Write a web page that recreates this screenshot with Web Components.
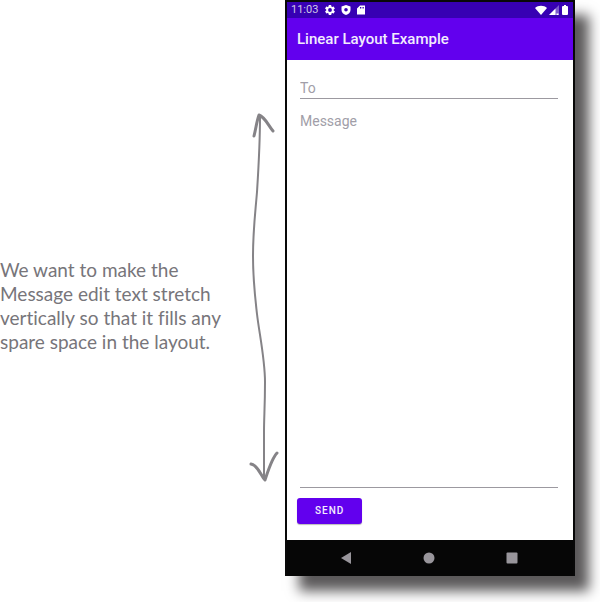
<!DOCTYPE html>
<html lang="en">
<head>
<meta charset="utf-8">
<meta name="viewport" content="width=device-width, initial-scale=1">
<title>Linear Layout Example</title>
<style>
  html, body { margin: 0; background: #fff; }
</style>
</head>
<body>
<figure-page>
  <hand-note slot="note">We want to make the<br>Message edit text stretch<br>vertically so that it fills any<br>spare space in the layout.</hand-note>
  <stretch-arrow slot="arrow"></stretch-arrow>
  <phone-frame slot="phone">
    <status-bar slot="top">11:03</status-bar>
    <app-bar slot="top">Linear Layout Example</app-bar>
    <message-form></message-form>
    <nav-bar slot="bottom"></nav-bar>
  </phone-frame>
</figure-page>

<script>
const define = (name, html) => {
  const template = document.createElement('template');
  template.innerHTML = html;
  customElements.define(name, class extends HTMLElement {
    constructor() {
      super();
      this.attachShadow({ mode: 'open' }).append(template.content.cloneNode(true));
    }
  });
};

define('figure-page', `
  <style>
    :host {
      display: grid; box-sizing: border-box; min-height: 100vh;
      grid-template-columns: minmax(0, 245fr) minmax(0, 40fr) minmax(0, 290fr);
      padding: 0 25px 26px 0; overflow: hidden;
      font-family: Roboto, "Liberation Sans", sans-serif;
    }
  </style>
  <slot name="note"></slot><slot name="arrow"></slot><slot name="phone"></slot>
`);

define('hand-note', `
  <style>
    :host {
      display: block; align-self: center; padding-top: 36px;
      font: 19px/24px Lato, "Liberation Sans", sans-serif;
      font-variant-ligatures: none;
      color: #77757a; white-space: nowrap;
    }
  </style>
  <slot></slot>
`);

define('stretch-arrow', `
  <style>
    :host { display: flex; padding: 112px 0 94px; }
    svg { width: 100%; height: 100%; overflow: visible; }
    path { fill: none; stroke: #858387; stroke-width: 2; stroke-linecap: round; stroke-linejoin: round; }
    .head { stroke-width: 3; }
  </style>
  <svg viewBox="0 0 40 370" preserveAspectRatio="none" aria-hidden="true">
    <path d="M15 4C15 34 13 64 12 80C10 104 8 119 8 144C8 169 10 184 12 202C14 220 20 247 20 270C20 295 19 305 19 320V367"/>
    <path class="head" d="M9 24C11 16 12 8 14 3C20 5 23 13 28 19"/>
    <path class="head" d="M6 352C13 353 16 364 20 368C23 359 27 346 32 341"/>
  </svg>
`);

define('phone-frame', `
  <style>
    :host {
      display: flex; flex-direction: column; background: #fff;
      border: 2px solid #080808; border-bottom-width: 0;
      box-shadow: 14px 15px 12px 0 #5b595a;
    }
    main { flex: 1; display: flex; }
  </style>
  <slot name="top"></slot>
  <main><slot></slot></main>
  <slot name="bottom"></slot>
`);

define('status-bar', `
  <style>
    :host {
      display: flex; align-items: center; height: 16px; padding: 0 4px;
      background: #3700b3; color: #d0c8e4; font-size: 11px; line-height: 16px;
    }
    .icons { display: flex; align-items: center; gap: 6px; margin-left: 7px; flex: 1; }
    .system { display: flex; align-items: center; gap: 2px; }
    svg { display: block; fill: #fff; }
  </style>
  <slot></slot>
  <div class="icons">
    <svg width="10" height="10" viewBox="2 2 20 20"><path d="M19.4 13a7.500 7.500 0 0 0 0-2l2.100-1.600a.5.5 0 0 0 .1-.6l-2-3.500a.5.5 0 0 0-.6-.2l-2.500 1a7.300 7.300 0 0 0-1.700-1l-.4-2.600a.5.5 0 0 0-.5-.5h-4a.5.5 0 0 0-.5.5L9 5.100a7.300 7.300 0 0 0-1.700 1l-2.500-1a.5.5 0 0 0-.6.2l-2 3.500a.5.5 0 0 0 .1.6L4.500 11a7.500 7.500 0 0 0 0 2l-2.100 1.600a.5.5 0 0 0-.1.6l2 3.500a.5.5 0 0 0 .6.200l2.500-1a7.300 7.300 0 0 0 1.700 1l.4 2.600a.5.5 0 0 0 .5.500h4a.5.5 0 0 0 .5-.5l.4-2.600a7.300 7.300 0 0 0 1.700-1l2.500 1a.5.5 0 0 0 .6-.2l2-3.500a.5.5 0 0 0-.1-.6zM12 15.800a3.800 3.800 0 1 1 0-7.600 3.800 3.800 0 0 1 0 7.600z"/></svg>
    <svg width="10" height="10" viewBox="0 0 10 10"><path fill-rule="evenodd" d="M5 0L9.500 1.500V5C9.500 7.500 7.500 9.500 5 10C2.500 9.500 .5 7.500 .5 5V1.500zM5 3A1.800 1.800 0 1 0 5 6.600A1.800 1.800 0 1 0 5 3"/></svg>
    <svg width="8" height="10" viewBox="0 0 8 10"><path fill-rule="evenodd" d="M3 0.500H8V9.500H0V3.500zM3 2V3.500H4V2zM4.700 2V3.500H5.500V2zM6.200 2V3.500H7V2z"/></svg>
  </div>
  <div class="system">
    <svg width="12" height="10" viewBox="0 0 12 10"><path d="M0 3C3 0 9 0 12 3L6 10z"/></svg>
    <svg width="10" height="10" viewBox="0 0 10 10"><path opacity=".35" d="M0 10L10 0V10z"/><path d="M0 10L6.500 3.500V10zM7.500 8.500H9.500V10H7.500z"/></svg>
    <svg width="8" height="10" viewBox="0 0 8 10"><path d="M3 0H5V1H6Q7 1 7 2V9Q7 10 6 10H2Q1 10 1 9V2Q1 1 2 1H3z"/></svg>
  </div>
`);

define('app-bar', `
  <style>
    :host { display: block; padding: 11px 10px 10px; background: #6200ee; color: #f2ecfd; }
    h1 { margin: 0; font-size: 15px; line-height: 21px; font-weight: 500; }
  </style>
  <h1><slot></slot></h1>
`);

define('message-form', `
  <style>
    :host { display: flex; flex: 1; }
    form { display: flex; flex-direction: column; flex: 1; padding: 18px 15px 16px 13px; }
    input, textarea {
      display: block; box-sizing: border-box; width: 100%; margin: 0; padding: 0; border: 0;
      border-bottom: 1px solid #9c99a0; border-radius: 0; background: none; outline: none;
      font: 14px/20px Roboto, "Liberation Sans", sans-serif; color: #333; resize: none;
    }
    input { height: 21px; }
    textarea { flex: 1; margin-top: 12px; }
    ::placeholder { color: #a19ea8; opacity: 1; }
    button {
      align-self: flex-start; margin: 10px 0 0 -3px; padding: 3px 18px; border: 0;
      border-radius: 3px; background: #6200ee; color: #f2ecfd; box-shadow: 0 1px 1px #bbb;
      font: 500 10px/20px Roboto, "Liberation Sans", sans-serif; letter-spacing: 1px;
    }
  </style>
  <form>
    <input type="text" placeholder="To" aria-label="To">
    <textarea placeholder="Message" aria-label="Message"></textarea>
    <button type="button">SEND</button>
  </form>
`);

define('nav-bar', `
  <style>
    :host { display: block; background: #060606; }
    nav { display: flex; justify-content: center; gap: 59px; padding: 6px 2px 6px 0; }
    button { display: flex; align-items: center; justify-content: center; width: 24px; height: 24px; padding: 0; border: 0; background: none; }
    svg { width: 12px; height: 12px; fill: #98959b; }
  </style>
  <nav>
    <button type="button" aria-label="Back"><svg viewBox="0 0 12 12"><path d="M1 6L11 0V12z"/></svg></button>
    <button type="button" aria-label="Home"><svg viewBox="0 0 12 12"><circle cx="6" cy="6" r="5.500"/></svg></button>
    <button type="button" aria-label="Overview"><svg viewBox="0 0 12 12"><rect x=".5" y=".5" width="11" height="11" rx="1"/></svg></button>
  </nav>
`);
</script>
</body>
</html>
